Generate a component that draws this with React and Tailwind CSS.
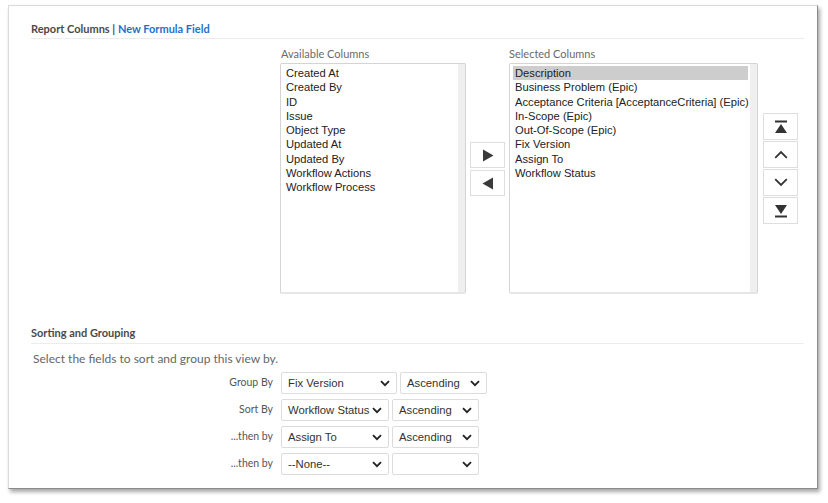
const available = [
  'Created At',
  'Created By',
  'ID',
  'Issue',
  'Object Type',
  'Updated At',
  'Updated By',
  'Workflow Actions',
  'Workflow Process',
];

const selected = [
  'Description',
  'Business Problem (Epic)',
  'Acceptance Criteria [AcceptanceCriteria] (Epic)',
  'In-Scope (Epic)',
  'Out-Of-Scope (Epic)',
  'Fix Version',
  'Assign To',
  'Workflow Status',
];

const sortRows = [
  { label: 'Group By', field: 'Fix Version', order: 'Ascending', w1: 'w-[116px]', w2: 'w-[87px]' },
  { label: 'Sort By', field: 'Workflow Status', order: 'Ascending', w1: 'w-[108px]', w2: 'w-[87px]' },
  { label: '...then by', field: 'Assign To', order: 'Ascending', w1: 'w-[108px]', w2: 'w-[87px]' },
  { label: '...then by', field: '--None--', order: '', w1: 'w-[108px]', w2: 'w-[87px]' },
];

function Chevron() {
  return (
    <svg width="10" height="7" viewBox="0 0 10 7" className="shrink-0">
      <path d="M1 1.2 L5 5.2 L9 1.2" fill="none" stroke="#222" strokeWidth="1.8" />
    </svg>
  );
}

function Select({ value, width }) {
  return (
    <div className={`${width} h-[22px] flex items-center justify-between pl-[6px] pr-[6px] border border-[#dcdcdc] rounded-[2px] bg-white text-[11.3px] text-[#333]`}>
      <span className="whitespace-nowrap">{value}</span>
      <Chevron />
    </div>
  );
}

function ListBox({ items, width, highlight }) {
  return (
    <div className={`${width} h-[231px] flex border border-[#d4d4d4] border-b-[2px] border-b-[#e6e6e6] rounded-[2px] bg-white`}>
      <div className="flex-1 pt-[2px] pl-[3px] pr-[2px] overflow-hidden">
        {items.map((it, i) => (
          <div
            key={it}
            className={`h-[14.3px] leading-[14.3px] pl-[2px] text-[11.2px] text-[#222] whitespace-nowrap ${highlight && i === 0 ? 'bg-[#cdcdcd]' : ''}`}
          >
            {it}
          </div>
        ))}
      </div>
      <div className="w-[7px] bg-[#efefef]"></div>
    </div>
  );
}

function SmallButton({ children, h = 'h-[27px]' }) {
  return (
    <div className={`w-[35px] ${h} flex items-center justify-center border border-[#dedede] bg-white`}>
      {children}
    </div>
  );
}

export default function App() {
  return (
    <div className="w-[828px] h-[503px] bg-white pt-[5px] pl-[8px] font-['Liberation_Sans',Arial,sans-serif]">
      <div className="w-[810px] h-[484px] bg-white border border-[#dadada] border-r-[#8a8a8a] border-b-[#8a8a8a] shadow-[2px_3px_4px_rgba(0,0,0,0.35)] pl-[22px] pr-[13px] pt-[16px]">
        {/* Report Columns header */}
        <div className="font-['Lato','Open_Sans',sans-serif] text-[11px] font-bold text-[#4a4a4a] h-[14px] leading-[14px]">
          Report Columns | <span className="text-[#1f6fd0]">New Formula Field</span>
        </div>
        <div className="mt-[2px] h-px bg-[#ececec]"></div>

        <div className="flex ml-[249px] mt-[9px]">
          <div>
            <div className="font-['Lato','Open_Sans',sans-serif] text-[11px] text-[#6a6a6a] h-[15px] leading-[12px] pl-[1px]">
              Available Columns
            </div>
            <ListBox items={available} width="w-[186px]" />
          </div>

          <div className="flex flex-col gap-[2px] mt-[94px] mx-[4px]">
            <SmallButton h="h-[26px]">
              <svg width="12" height="13" viewBox="0 0 12 13">
                <path d="M1 0.5 L11.5 6.5 L1 12.5 Z" fill="#3a3a3a" />
              </svg>
            </SmallButton>
            <SmallButton h="h-[26px]">
              <svg width="12" height="13" viewBox="0 0 12 13">
                <path d="M11 0.5 L0.5 6.5 L11 12.5 Z" fill="#3a3a3a" />
              </svg>
            </SmallButton>
          </div>

          <div>
            <div className="font-['Lato','Open_Sans',sans-serif] text-[11px] text-[#6a6a6a] h-[15px] leading-[12px]">
              Selected Columns
            </div>
            <ListBox items={selected} width="w-[249px]" highlight />
          </div>

          <div className="flex flex-col gap-px mt-[65px] ml-[5px]">
            <SmallButton>
              <svg width="14" height="14" viewBox="0 0 14 14">
                <rect x="1" y="0.5" width="12" height="2" fill="#333" />
                <path d="M7 4 L13 13 L1 13 Z" fill="#333" />
              </svg>
            </SmallButton>
            <SmallButton>
              <svg width="14" height="9" viewBox="0 0 14 9">
                <path d="M1.2 7.8 L7 2 L12.8 7.8" fill="none" stroke="#333" strokeWidth="1.8" />
              </svg>
            </SmallButton>
            <SmallButton>
              <svg width="14" height="9" viewBox="0 0 14 9">
                <path d="M1.2 1.2 L7 7 L12.8 1.2" fill="none" stroke="#333" strokeWidth="1.8" />
              </svg>
            </SmallButton>
            <SmallButton>
              <svg width="14" height="14" viewBox="0 0 14 14">
                <path d="M1 1 L13 1 L7 10 Z" fill="#333" />
                <rect x="1" y="11.5" width="12" height="2" fill="#333" />
              </svg>
            </SmallButton>
          </div>
        </div>

        {/* Sorting and Grouping */}
        <div className="mt-[32px] font-['Lato','Open_Sans',sans-serif] text-[11px] font-bold text-[#4a4a4a] h-[14px] leading-[14px]">
          Sorting and Grouping
        </div>
        <div className="mt-[3px] h-px bg-[#ececec]"></div>
        <div className="mt-[7px] pl-[2px] font-['Lato','Open_Sans',sans-serif] text-[12px] text-[#666] h-[15px] leading-[15px]">
          Select the fields to sort and group this view by.
        </div>

        <div className="mt-[6px] flex flex-col gap-[5px]">
          {sortRows.map((r, i) => (
            <div key={i} className="flex items-center">
              <div className="w-[242px] text-right font-['Lato','Open_Sans',sans-serif] text-[10.5px] text-[#555] leading-[14px] -mt-[3px]">
                {r.label}
              </div>
              <div className="ml-[8px] flex gap-[3px]">
                <Select value={r.field} width={r.w1} />
                <Select value={r.order} width={r.w2} />
              </div>
            </div>
          ))}
        </div>
      </div>
    </div>
  );
}
